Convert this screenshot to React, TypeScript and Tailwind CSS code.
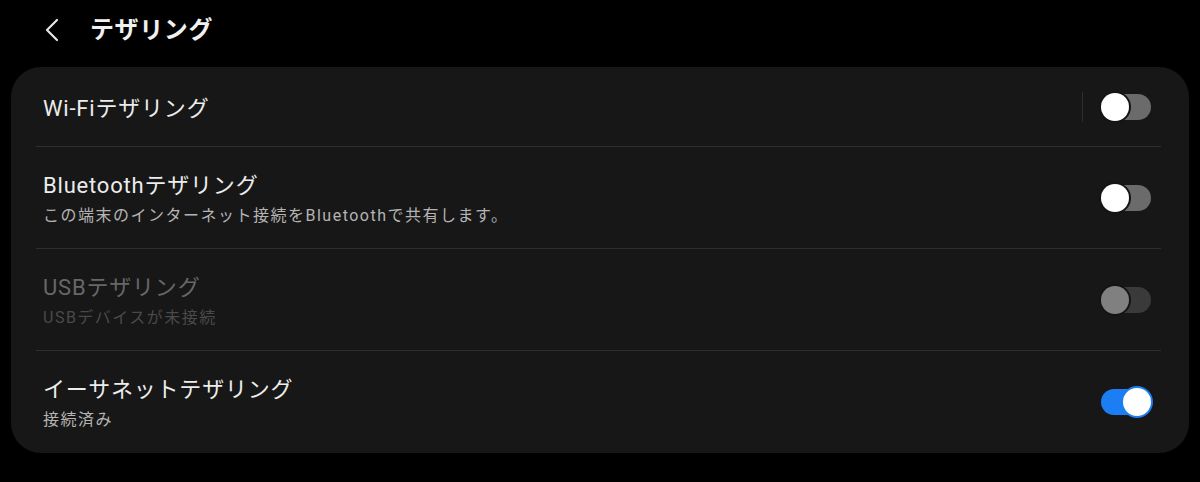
type Row = {
  title: string;
  sub?: string;
  on?: boolean;
  disabled?: boolean;
  divider?: boolean;
};

const rows: Row[] = [
  { title: "Wi-Fiテザリング", divider: true },
  { title: "Bluetoothテザリング", sub: "この端末のインターネット接続をBluetoothで共有します。" },
  { title: "USBテザリング", sub: "USBデバイスが未接続", disabled: true },
  { title: "イーサネットテザリング", sub: "接続済み", on: true },
];

function Toggle({ on, disabled }: { on?: boolean; disabled?: boolean }) {
  if (on) {
    return (
      <div className="relative h-[26px] w-[50px] rounded-full bg-[#1b7ef2]">
        <div className="absolute right-0 top-[-1px] h-[28px] w-[28px] rounded-full bg-white ring-2 ring-[#1b7ef2]" />
      </div>
    );
  }
  return (
    <div className={`relative h-[26px] w-[50px] rounded-full ${disabled ? "bg-[#3a3a3a]" : "bg-[#6b6b6b]"}`}>
      <div
        className={`absolute left-0 top-[-1px] h-[28px] w-[28px] rounded-full ring-2 ring-[#141414] ${
          disabled ? "bg-[#808080]" : "bg-white"
        }`}
      />
    </div>
  );
}

export default function App() {
  return (
    <div
      className="h-[482px] w-[1200px] bg-black pt-[14px]"
      style={{ fontFamily: "Roboto, 'Noto Sans CJK JP', sans-serif" }}
    >
      {/* Header */}
      <div className="flex h-[32px] items-center pl-[44px]">
        <svg width="16" height="24" viewBox="0 0 16 24" className="text-[#e6e6e6]">
          <path d="M13 2 L3 12 L13 22" fill="none" stroke="currentColor" strokeWidth="2.2" strokeLinecap="round" strokeLinejoin="round" />
        </svg>
        <span className="ml-[30px] text-[24px] font-bold tracking-[0.6px] text-[#f0f0f0]">テザリング</span>
      </div>

      {/* Card */}
      <div className="mx-[11px] mt-[21px] overflow-hidden rounded-[30px] bg-[#171717] pl-[25px] pr-[28px]">
        {rows.map((r, i) => (
          <div
            key={r.title}
            className={`flex items-center justify-between ${i === 0 ? "h-[80px]" : "h-[102px]"} ${
              i < rows.length - 1 ? "border-b border-[#2e2e2e]" : ""
            }`}
          >
            <div className={`pl-[7px] ${i === 0 ? "pt-[5px]" : "pt-[2px]"}`}>
              <div
                className={`text-[22px] leading-[30px] tracking-[0.8px] ${
                  r.disabled ? "text-[#676767]" : "text-[#ececec]"
                }`}
              >
                {r.title}
              </div>
              {r.sub && (
                <div
                  className={`mt-[4px] text-[16px] leading-[22px] tracking-[1.5px] ${
                    r.disabled ? "text-[#4a4a4a]" : "text-[#b4b4b4]"
                  }`}
                >
                  {r.sub}
                </div>
              )}
            </div>
            <div className="flex items-center pr-[10px]">
              {r.divider && <div className="mr-[18px] h-[30px] w-px bg-[#2e2e2e]" />}
              <Toggle on={r.on} disabled={r.disabled} />
            </div>
          </div>
        ))}
      </div>
    </div>
  );
}
